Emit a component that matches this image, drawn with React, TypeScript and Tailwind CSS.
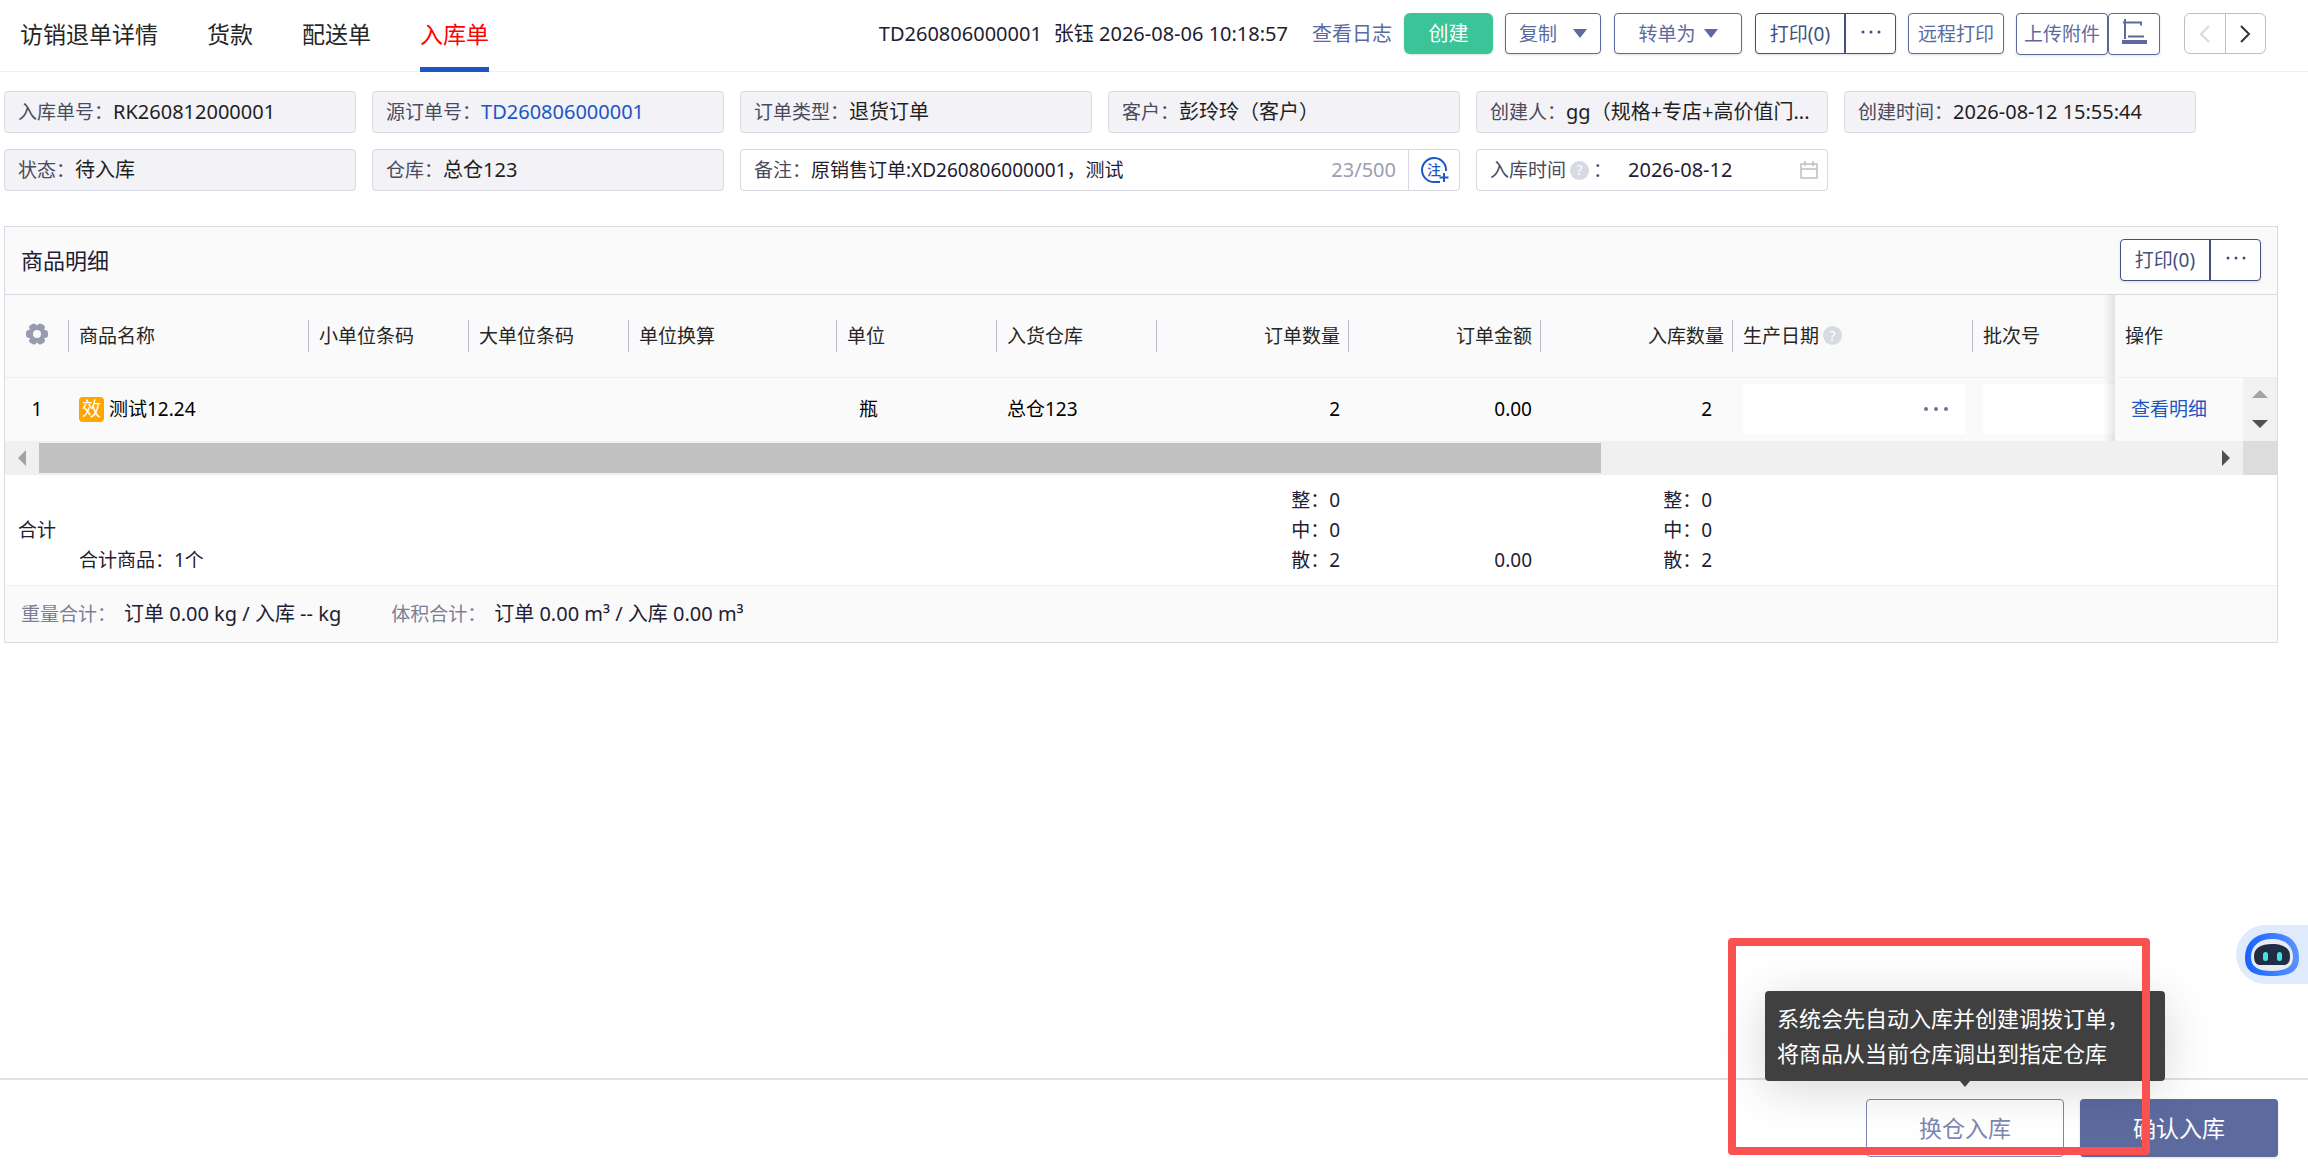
import type { ReactNode } from "react";
import clsx from "clsx";

const tabs = ["访销退单详情", "货款", "配送单", "入库单"];
const activeTab = "入库单";

const toolButton =
  "flex items-center justify-center rounded-[4px] border border-[#5c6a9e] bg-white text-[#5c6a9e] shadow-sm";

// soft edge to the left of the pinned column
const pinnedEdge =
  "relative bg-[#fafafa] before:absolute before:inset-y-0 before:right-full before:w-3 before:bg-linear-to-l before:from-black/10 before:to-transparent before:content-['']";

export default function App() {
  return (
    <div className="relative flex min-h-screen flex-col overflow-hidden bg-white font-['Noto_Sans','Noto_Sans_CJK_SC',sans-serif] text-[19px] leading-[30px] text-[#1f2033]">
      <TopBar />
      <main className="pl-1">
        <OrderFields />
        <GoodsCard />
      </main>
      <AssistantButton />
      <BottomBar />
    </div>
  );
}

function TopBar() {
  return (
    <header className="flex h-[72px] items-center border-b border-[#eeeeee] pr-[42px] pb-1">
      <nav className="flex gap-[49px] pl-5 text-[23px]">
        {tabs.map((tab) => (
          <a
            key={tab}
            href="#"
            className={clsx(
              "relative whitespace-nowrap",
              tab === activeTab ? "text-[#ff0000]" : "text-[#262626]",
            )}
          >
            {tab}
            {tab === activeTab && <span className="absolute inset-x-0 -bottom-[23px] h-[5px] bg-[#1b56c4]" />}
          </a>
        ))}
      </nav>

      <div className="ml-auto flex items-center whitespace-nowrap">
        <span className="text-[20px]">TD260806000001</span>
        <span className="ml-3 text-[20px]">张钰 2026-08-06 10:18:57</span>
        <a href="#" className="ml-6 text-[20px] text-[#5c6a9e]">查看日志</a>
        <button className="ml-3 h-[41px] w-[89px] rounded-[6px] bg-[#3bc498] text-[20px] text-white shadow-sm">创建</button>
        <button className={clsx(toolButton, "ml-3 h-[41px] w-24 gap-4")}>
          复制 <Caret />
        </button>
        <button className={clsx(toolButton, "ml-[13px] h-[41px] w-32 gap-2")}>
          转单为 <Caret />
        </button>
        <PrintGroup className="ml-[13px] h-[41px]" />
        <button className={clsx(toolButton, "ml-3 h-[41px] w-24")}>远程打印</button>
        <button className={clsx(toolButton, "ml-3 h-[42px] w-[92px]")}>上传附件</button>
        <button aria-label="附件" className={clsx(toolButton, "h-[42px] w-[52px] pb-1")}>
          <ScanIcon />
        </button>
        <div className="ml-6 flex h-[41px] w-[82px] rounded-[6px] border border-[#bfbfbf]">
          <button aria-label="上一单" className="flex flex-1 items-center justify-center border-r border-[#bfbfbf] text-[#d9d9d9]">
            <Chevron d="M10 1 2 9l8 8" />
          </button>
          <button aria-label="下一单" className="flex flex-1 items-center justify-center text-[#333333]">
            <Chevron d="M2 1l8 8-8 8" />
          </button>
        </div>
      </div>
    </header>
  );
}

function PrintGroup({ className }: { className: string }) {
  return (
    <div className={clsx("flex rounded-[4px] border border-[#434f7e] bg-white text-[#434f7e] shadow-sm", className)}>
      <button className="w-[90px] border-r-2 border-[#434f7e]">打印(0)</button>
      <button aria-label="更多打印" className="flex w-[49px] items-center justify-center pb-1">
        <Dots />
      </button>
    </div>
  );
}

function OrderFields() {
  return (
    <section className="grid grid-cols-6 gap-4 pt-[19px] pr-[112px]">
      <Field label="入库单号">RK260812000001</Field>
      <Field label="源订单号">
        <a href="#" className="text-[#1b56c4]">TD260806000001</a>
      </Field>
      <Field label="订单类型">退货订单</Field>
      <Field label="客户">彭玲玲（客户）</Field>
      <Field label="创建人">gg（规格+专店+高价值门...</Field>
      <Field label="创建时间">2026-08-12 15:55:44</Field>
      <Field label="状态">待入库</Field>
      <Field label="仓库">总仓123</Field>
      <div className="col-span-2 flex h-[42px] items-center rounded-[4px] border border-[#d8d9e3] pl-[13px]">
        <label htmlFor="remark" className="text-[#4a4b5c]">备注：</label>
        <input id="remark" defaultValue="原销售订单:XD260806000001，测试" className="min-w-0 flex-1 outline-none" />
        <span className="pr-3 text-[20px] text-[#9c9eae]">23/500</span>
        <button aria-label="添加备注" className="flex h-full w-[51px] items-center justify-center border-l border-[#d8d9e3]">
          <NoteIcon />
        </button>
      </div>
      <div className="flex h-[42px] items-center rounded-[4px] border border-[#d8d9e3] pr-[9px] pl-[13px]">
        <label htmlFor="inDate" className="flex items-center text-[#4a4b5c]">
          入库时间
          <HelpIcon />
          <span className="ml-1">：</span>
        </label>
        <input id="inDate" defaultValue="2026-08-12" className="ml-4 w-0 min-w-0 flex-1 text-[20px] outline-none" />
        <CalendarIcon />
      </div>
    </section>
  );
}

function Field({ label, children }: { label: string; children: ReactNode }) {
  return (
    <div className="flex h-[42px] items-center overflow-hidden rounded-[4px] border border-[#d8d9e3] bg-[#f2f2f7] pl-[13px] whitespace-nowrap">
      <span className="text-[#4a4b5c]">{label}：</span>
      <span className="text-[20px] text-[#1f1f1f]">{children}</span>
    </div>
  );
}

function Columns() {
  return (
    <colgroup>
      <col className="w-16" />
      <col className="w-60" />
      <col className="w-40" />
      <col className="w-40" />
      <col className="w-52" />
      <col className="w-40" />
      <col className="w-40" />
      <col className="w-48" />
      <col className="w-48" />
      <col className="w-48" />
      <col className="w-60" />
      <col />
      <col className="w-32" />
      <col className="w-[34px]" />
    </colgroup>
  );
}

function HeadCell({ children, right, last }: { children: ReactNode; right?: boolean; last?: boolean }) {
  return (
    <th className="p-0 font-normal">
      <div
        className={clsx(
          "flex h-8 items-center whitespace-nowrap",
          right ? "justify-end pr-2" : "pl-[10px]",
          !last && "border-r border-[#b9bac8]",
        )}
      >
        {children}
      </div>
    </th>
  );
}

function GoodsCard() {
  return (
    <section className="mt-[35px] mr-[30px] border border-[#d8d9e3]">
      <div className="flex h-[68px] items-center justify-between border-b border-[#d8d9e3] bg-[#fafafa] pr-4 pb-px pl-4">
        <h2 className="text-[22px]">商品明细</h2>
        <PrintGroup className="h-[42px]" />
      </div>

      <table className="w-full table-fixed border-collapse bg-[#fafafa] text-left text-black">
        <Columns />
        <thead className="text-[#262626]">
          <tr className="h-[82px] border-b border-[#eeeeee]">
            <th className="p-0">
              <div className="flex h-8 items-center justify-center border-r border-[#b9bac8] pb-1">
                <GearIcon />
              </div>
            </th>
            <HeadCell>商品名称</HeadCell>
            <HeadCell>小单位条码</HeadCell>
            <HeadCell>大单位条码</HeadCell>
            <HeadCell>单位换算</HeadCell>
            <HeadCell>单位</HeadCell>
            <HeadCell>入货仓库</HeadCell>
            <HeadCell right>订单数量</HeadCell>
            <HeadCell right>订单金额</HeadCell>
            <HeadCell right>入库数量</HeadCell>
            <HeadCell>
              生产日期
              <HelpIcon />
            </HeadCell>
            <HeadCell last>批次号</HeadCell>
            <th colSpan={2} className={clsx(pinnedEdge, "p-0 pl-[10px] font-normal")}>
              操作
            </th>
          </tr>
        </thead>
        <tbody>
          <tr className="h-16">
            <td className="p-0 text-center">1</td>
            <td className="p-0 pl-[10px]">
              <div className="flex items-center gap-[5px]">
                <span className="flex size-[25px] items-center justify-center rounded-[4px] bg-[#ffa500] text-white">效</span>
                测试12.24
              </div>
            </td>
            <td />
            <td />
            <td />
            <td className="p-0 pl-[22px]">瓶</td>
            <td className="p-0 pl-[10px]">总仓123</td>
            <td className="p-0 pr-[9px] text-right">2</td>
            <td className="p-0 pr-[9px] text-right">0.00</td>
            <td className="p-0 pr-[21px] text-right">2</td>
            <td className="p-0 pr-2 pl-[10px]">
              <div className="flex h-[50px] items-center justify-end bg-white pr-4 text-[#6f7492]">
                <button aria-label="选择生产日期">
                  <Dots large />
                </button>
              </div>
            </td>
            <td className="p-0 pl-[10px]">
              <input aria-label="批次号" className="block h-[50px] w-full bg-white px-2 outline-none" />
            </td>
            <td className={clsx(pinnedEdge, "p-0 pl-4")}>
              <a href="#" className="text-[#1b56c4]">查看明细</a>
            </td>
            <td className="bg-[#f1f1f1] p-0">
              <div className="flex flex-col items-center gap-[22px]">
                <Triangle className="text-[#a3a3a3]" d="M0 8 8 0l8 8z" w={16} h={8} />
                <Triangle className="text-[#505050]" d="M0 0h16L8 8z" w={16} h={8} />
              </div>
            </td>
          </tr>
        </tbody>
      </table>

      <div className="flex h-[34px] bg-[#f0f0f0]">
        <div className="flex w-[34px] items-center justify-center">
          <Triangle className="text-[#a3a3a3]" d="M8 0v16L0 8z" w={8} h={16} />
        </div>
        <div className="flex flex-1 items-center">
          <div className="h-[30px] w-[72%] bg-[#c1c1c1]" />
        </div>
        <div className="flex w-[34px] items-center justify-center">
          <Triangle className="text-[#505050]" d="M0 0l8 8-8 8z" w={8} h={16} />
        </div>
        <div className="w-[34px] bg-[#dcdcdc]" />
      </div>

      <table className="w-full table-fixed border-collapse">
        <Columns />
        <tbody>
          <tr className="h-[110px]">
            <td className="p-0 pl-[13px] whitespace-nowrap">合计</td>
            <td colSpan={6} className="p-0 pb-[10px] pl-[10px] align-bottom">合计商品：1个</td>
            <td className="p-0 pr-[9px]">
              <UnitCounts />
            </td>
            <td className="p-0 pr-[9px] pb-[10px] text-right align-bottom">0.00</td>
            <td className="p-0 pr-[21px]">
              <UnitCounts />
            </td>
            <td colSpan={4} />
          </tr>
        </tbody>
      </table>

      <div className="flex h-[57px] items-center border-t border-[#eeeeee] bg-[#fafafa] pl-4">
        <span className="text-[#7b7e95]">重量合计：</span>
        <span className="ml-2 text-[20px]">订单 0.00 kg / 入库 -- kg</span>
        <span className="ml-[50px] text-[#7b7e95]">体积合计：</span>
        <span className="ml-2 text-[20px]">订单 0.00 m³ / 入库 0.00 m³</span>
      </div>
    </section>
  );
}

function UnitCounts() {
  return (
    <div className="flex flex-col items-end">
      <span>整：0</span>
      <span>中：0</span>
      <span>散：2</span>
    </div>
  );
}

function BottomBar() {
  return (
    <footer className="relative mt-auto flex h-24 items-start justify-end gap-4 border-t-2 border-[#dfe0e8] pt-[19px] pr-[30px] text-[23px]">
      <div className="relative">
        <button className="h-[58px] w-[198px] rounded-[4px] border border-[#7d88b2] bg-transparent text-[#7d88b2]">换仓入库</button>
        <div
          role="tooltip"
          className="absolute bottom-[76px] left-1/2 w-[400px] -translate-x-1/2 rounded-[4px] bg-[#404040] px-3 py-[10px] text-[22px] leading-[35px] whitespace-nowrap text-white shadow-[0_8px_48px_rgba(0,0,0,0.16)]"
        >
          系统会先自动入库并创建调拨订单，
          <br />
          将商品从当前仓库调出到指定仓库
          <span className="absolute top-full left-1/2 -translate-x-1/2 text-[#404040]">
            <Triangle d="M0 0h10L5 6z" w={10} h={6} />
          </span>
        </div>
      </div>
      <button className="h-[58px] w-[198px] rounded-[4px] bg-[#5c6a9e] text-white shadow-sm">确认入库</button>
      <div className="pointer-events-none absolute right-[158px] bottom-[19px] h-[217px] w-[422px] rounded-[4px] border-8 border-[#fb5151]" />
    </footer>
  );
}

function AssistantButton() {
  return (
    <button aria-label="智能助手" className="absolute right-0 bottom-[190px] flex h-[59px] w-[72px] items-center rounded-l-full bg-[#dfeafd] pl-2">
      <svg width="56" height="44" viewBox="0 0 56 44">
        <defs>
          <linearGradient id="ring" x1="0" x2="1">
            <stop offset="0" stopColor="#1763ff" />
            <stop offset="1" stopColor="#5b93ff" />
          </linearGradient>
        </defs>
        <path d="M28 0C44 0 55 9 55 25c0 14-10 18-27 18S1 39 1 25C1 9 12 0 28 0z" fill="url(#ring)" />
        <path d="M28 6c13 0 21 7 21 18 0 10-7 14-21 14S7 34 7 24C7 13 15 6 28 6z" fill="#e9ebf3" />
        <path d="M28 11c11 0 18 4 18 12 0 7-3 9-6 9H16c-3 0-6-2-6-9 0-8 7-12 18-12z" fill="#222d45" />
        <rect x="19" y="19" width="5" height="9" rx="2.5" fill="#3fe6e0" />
        <rect x="33" y="19" width="5" height="9" rx="2.5" fill="#3fe6e0" />
      </svg>
    </button>
  );
}

function Triangle({ d, w, h, className }: { d: string; w: number; h: number; className?: string }) {
  return (
    <svg className={clsx("block", className)} width={w} height={h} fill="currentColor">
      <path d={d} />
    </svg>
  );
}

function Caret() {
  return <Triangle d="M0 0h14L7 9z" w={14} h={9} />;
}

function Chevron({ d }: { d: string }) {
  return (
    <svg width="12" height="18" fill="none" stroke="currentColor" strokeWidth={2}>
      <path d={d} />
    </svg>
  );
}

function Dots({ large }: { large?: boolean }) {
  return large ? (
    <svg width="26" height="6" fill="currentColor">
      <circle cx="3" cy="3" r="2" />
      <circle cx="13" cy="3" r="2" />
      <circle cx="23" cy="3" r="2" />
    </svg>
  ) : (
    <svg width="20" height="4" fill="currentColor">
      <circle cx="2" cy="2" r="1.5" />
      <circle cx="10" cy="2" r="1.5" />
      <circle cx="18" cy="2" r="1.5" />
    </svg>
  );
}

function HelpIcon() {
  return (
    <span className="ml-1 flex size-[19px] items-center justify-center rounded-full bg-[#d8dae2] text-[14px] leading-none text-white">?</span>
  );
}

function ScanIcon() {
  return (
    <svg width="25" height="25" fill="none" stroke="currentColor">
      <path d="M3 0v20M1 3.500h18v3M6 17.500h16" strokeWidth={2} />
      <path d="M0 23h25" strokeWidth={4} />
    </svg>
  );
}

function CalendarIcon() {
  return (
    <svg width="18" height="18" fill="none" stroke="#bfbfbf" strokeWidth={1.5}>
      <path d="M1 3h16v14H1zM1 8h16M5 0v5M13 0v5" />
    </svg>
  );
}

function GearIcon() {
  return (
    <svg width="24" height="24" viewBox="0 0 24 24">
      <g fill="#989bb0">
        <circle cx="12" cy="12" r="8.500" />
        <rect x="1" y="8" width="22" height="8" rx="3" />
        <rect x="1" y="8" width="22" height="8" rx="3" transform="rotate(60 12 12)" />
        <rect x="1" y="8" width="22" height="8" rx="3" transform="rotate(120 12 12)" />
      </g>
      <circle cx="12" cy="12" r="4" fill="#fafafa" />
    </svg>
  );
}

function NoteIcon() {
  return (
    <span className="relative flex size-7 items-center justify-center text-[14px] leading-none font-medium text-[#1b56c4]">
      <svg className="absolute inset-0" width="30" height="28" fill="none" stroke="currentColor" strokeWidth={2}>
        <path d="M26 15A12 12 0 1 0 14 26h6M24 17v9M19.500 21.500h9" />
      </svg>
      注
    </span>
  );
}
